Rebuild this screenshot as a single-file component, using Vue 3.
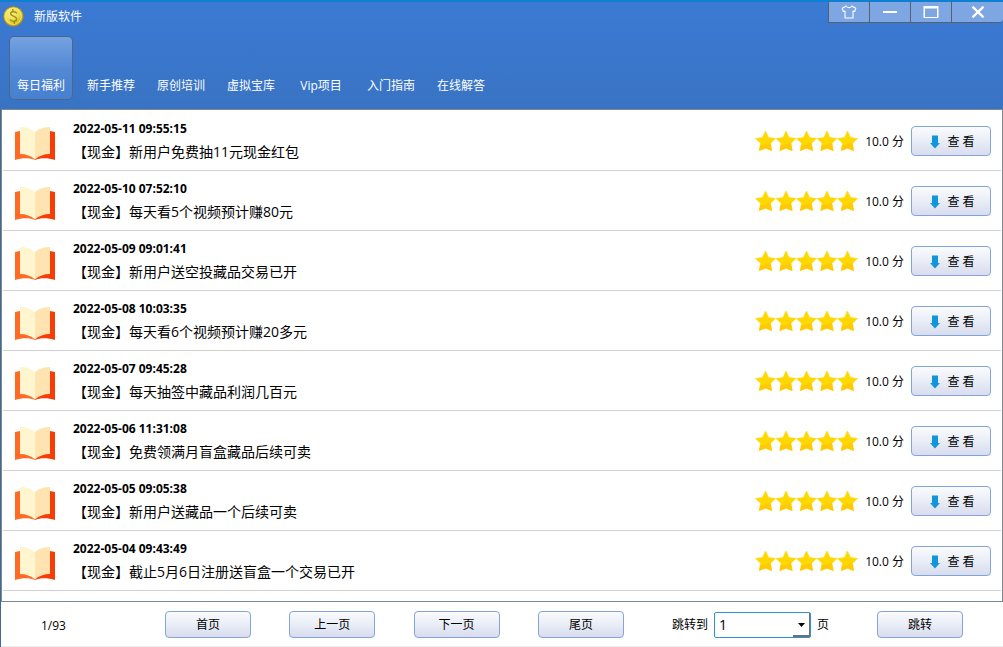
<script setup>
import { ref } from 'vue'

const tabs = ['每日福利', '新手推荐', '原创培训', '虚拟宝库', 'Vip项目', '入门指南', '在线解答']
const active = ref(0)
const page = ref(1)

const items = [
  { time: '2022-05-11 09:55:15', title: '【现金】新用户免费抽11元现金红包' },
  { time: '2022-05-10 07:52:10', title: '【现金】每天看5个视频预计赚80元' },
  { time: '2022-05-09 09:01:41', title: '【现金】新用户送空投藏品交易已开' },
  { time: '2022-05-08 10:03:35', title: '【现金】每天看6个视频预计赚20多元' },
  { time: '2022-05-07 09:45:28', title: '【现金】每天抽签中藏品利润几百元' },
  { time: '2022-05-06 11:31:08', title: '【现金】免费领满月盲盒藏品后续可卖' },
  { time: '2022-05-05 09:05:38', title: '【现金】新用户送藏品一个后续可卖' },
  { time: '2022-05-04 09:43:49', title: '【现金】截止5月6日注册送盲盒一个交易已开' }
]
</script>

<template>
  <div class="window">
    <header class="header">
      <div class="titlebar">
        <svg class="coin" viewBox="0 0 22 22" aria-hidden="true">
          <defs>
            <radialGradient id="coinFill" cx="0.4" cy="0.35" r="0.7">
              <stop offset="0" stop-color="#fbf48a" />
              <stop offset="0.6" stop-color="#e6d63a" />
              <stop offset="1" stop-color="#a98f10" />
            </radialGradient>
          </defs>
          <circle cx="11" cy="11" r="10.3" fill="url(#coinFill)" stroke="#a58a1c" stroke-width="0.8" />
          <circle cx="11" cy="11" r="8.2" fill="none" stroke="#f7ef86" stroke-width="1" />
          <path d="M14 7.2C12.6 5.4 8 5.4 8 8.2C8 11 14.2 10.4 14.2 13.6C14.2 16.6 9.4 16.8 7.8 14.6M10.2 3.8L10.8 6M11.6 15.8L12 18.2" fill="none" stroke="#a38c1a" stroke-width="1.5" stroke-linecap="round" />
        </svg>
        <h1 class="name">新版软件</h1>
        <div class="controls">
          <button class="ctl" type="button" aria-label="换肤">
            <svg width="16" height="14" viewBox="0 0 16 14" fill="none" stroke="#fff" stroke-width="1.1" stroke-linejoin="round">
              <path d="M5.3 1L1.2 3.2L2.2 6.4L4 6V13H12V6L13.8 6.4L14.8 3.2L10.7 1C10.2 3.2 5.8 3.2 5.3 1Z" />
            </svg>
          </button>
          <button class="ctl" type="button" aria-label="最小化">
            <svg width="14" height="14" viewBox="0 0 14 14"><path d="M0 6H14V8H0Z" fill="#fff" /></svg>
          </button>
          <button class="ctl" type="button" aria-label="最大化">
            <svg width="16" height="12" viewBox="0 0 16 12"><path fill-rule="evenodd" d="M0.5 0H15.5V12H0.5ZM2 2.5V11H14V2.5Z" fill="#fff" /></svg>
          </button>
          <button class="ctl close" type="button" aria-label="关闭">
            <svg width="14" height="12" viewBox="0 0 14 12"><path d="M1.5 0.7L12.5 11.3M12.5 0.7L1.5 11.3" stroke="#fff" stroke-width="2.4" /></svg>
          </button>
        </div>
      </div>
      <nav class="tabs">
        <button
          v-for="(tab, i) in tabs"
          :key="tab"
          type="button"
          class="tab"
          :class="{ active: i === active }"
          @click="active = i"
        >{{ tab }}</button>
      </nav>
    </header>

    <main class="body">
      <ul class="list">
        <li v-for="item in items" :key="item.time" class="row">
          <svg class="book" viewBox="0 0 42 36" aria-hidden="true">
            <path d="M1 6L6 5L21 10V34C16 31.5 8 31.5 1 34Z" fill="#ff6a25" />
            <path d="M41 6L36 5L21 10V34C26 31.5 34 31.5 41 34Z" fill="#f83c05" />
            <path d="M6 1Q15 1 21 6V33.5Q15 28 6 28Z" fill="#fff5cf" />
            <path d="M36 1Q27 1 21 6V33.5Q27 28 36 28Z" fill="#ffe4b1" />
          </svg>
          <div class="text">
            <time class="time">{{ item.time }}</time>
            <p class="title">{{ item.title }}</p>
          </div>
          <svg class="stars" viewBox="0 0 103 22" role="img" aria-label="五星">
            <g v-for="n in 5" :key="n" :transform="`translate(${(n - 1) * 20.5} 0)`">
              <path d="M10.5 1L13.5 7.6L20.5 8.5L15.4 13.3L16.8 20.7L10.5 18.2L4.2 20.7L5.6 13.3L0.5 8.5L7.5 7.6Z" fill="#ffd800" stroke="#ffd800" stroke-width="0.6" stroke-linejoin="round" />
              <path d="M18 10.9L15.4 13.3L16.8 20.7L10.5 18.2L4.2 20.7L5.2 15.3Q13 15 18 10.9Z" fill="#ffc808" />
            </g>
          </svg>
          <span class="score">10.0 分</span>
          <button class="btn view" type="button">
            <svg width="10" height="14" viewBox="0 0 10 14" aria-hidden="true">
              <path d="M2 0.5H8V8H10L5 13.5L0 8H2Z" fill="#1296db" />
            </svg>
            <span>查 看</span>
          </button>
        </li>
      </ul>
    </main>

    <footer class="footer">
      <span class="count">1/93</span>
      <div class="pager">
        <button class="btn" type="button">首页</button>
        <button class="btn" type="button">上一页</button>
        <button class="btn" type="button">下一页</button>
        <button class="btn" type="button">尾页</button>
      </div>
      <div class="jump">
        <label for="page">跳转到</label>
        <span class="combo">
          <select id="page" v-model="page">
            <option v-for="n in 93" :key="n" :value="n">{{ n }}</option>
          </select>
          <svg class="caret" width="7" height="4" viewBox="0 0 7 4" aria-hidden="true"><path d="M0 0H7L3.5 4Z" fill="#000" /></svg>
        </span>
        <span>页</span>
      </div>
      <button class="btn go" type="button">跳转</button>
    </footer>
  </div>
</template>

<style>
body {
  background: #fff;
}
</style>

<style scoped>
.window,
.window * {
  box-sizing: border-box;
}
.window {
  display: flex;
  flex-direction: column;
  min-height: 100vh;
  border-left: 1px solid #3c6a9c;
  font-family: "Open Sans", "Noto Sans CJK SC", sans-serif;
  font-size: 12px;
  line-height: 18px;
  color: #000;
}
button {
  margin: 0;
  padding: 0;
  font: inherit;
  color: inherit;
}
.header {
  margin-left: -1px;
  padding-bottom: 9px;
  border-top: 2px solid #0f7fd0;
  background: linear-gradient(#3b7ad4, #3973c3);
  color: #fff;
}
.titlebar {
  display: flex;
  align-items: flex-start;
  padding-left: 3px;
}
.coin {
  width: 21px;
  height: 21px;
  margin-top: 4px;
}
.name {
  flex: 1;
  margin: 6px 0 0 10px;
  font-size: 12px;
  font-weight: 400;
}
.controls {
  display: flex;
  height: 21px;
  border: solid #54626f;
  border-width: 0 0 1px 1px;
  border-bottom-right-radius: 4px;
  overflow: hidden;
}
.ctl {
  display: flex;
  align-items: center;
  justify-content: center;
  width: 41px;
  border: 0;
  border-right: 1px solid #54626f;
  background: #7da6e2;
}
.ctl.close {
  width: 51px;
  border-right: 0;
}
.tabs {
  display: flex;
  gap: 6px;
  padding: 9px 9px 0;
}
.tab {
  display: flex;
  align-items: flex-end;
  justify-content: center;
  width: 64px;
  height: 64px;
  padding-bottom: 4px;
  border: 1px solid transparent;
  border-radius: 5px;
  background: none;
}
.tab.active {
  border-color: #4d668c;
  background: linear-gradient(#76a2e0, #5389d4 50%, #4680cf);
}
.body {
  flex: 1;
  border: 1px solid #828790;
  border-bottom-color: #7b8792;
}
.list {
  margin: 0;
  padding: 1px 1px 0;
  list-style: none;
}
.row {
  display: flex;
  align-items: center;
  height: 60px;
  padding: 0 10px 0 11px;
  border-bottom: 1px solid #d3d3d3;
}
.book {
  width: 42px;
  height: 36px;
  margin-top: 6px;
}
.text {
  flex: 1;
  margin: 2px 0 0 17px;
}
.time {
  display: block;
  font-weight: 700;
  line-height: 20px;
}
.title {
  margin: 0;
  font-size: 14px;
  line-height: 26px;
}
.stars {
  width: 103px;
  height: 22px;
}
.score {
  margin: 2px 7px 0 7px;
}
.btn {
  height: 27px;
  padding-top: 1px;
  border: 1px solid #83a6d8;
  border-radius: 4px;
  background: linear-gradient(#fafbfd, #e9edf6 50%, #d8dcee);
}
.view {
  display: flex;
  align-items: center;
  justify-content: center;
  gap: 7px;
  width: 80px;
  height: 30px;
  padding: 2px 0 0 3px;
}
.footer {
  display: flex;
  align-items: center;
  height: 45px;
  padding: 1px 40px 0 40px;
  border-bottom: 1px solid #ececec;
}
.count {
  width: 124px;
  padding-top: 2px;
}
.pager {
  display: flex;
  flex: 1;
  justify-content: space-between;
}
.pager .btn,
.go {
  width: 86px;
}
.jump {
  display: flex;
  align-items: center;
  gap: 6px;
  margin: 0 48px;
}
.combo {
  position: relative;
}
.combo select {
  display: block;
  width: 97px;
  height: 26px;
  padding: 0 4px;
  appearance: none;
  border: 1px solid #2f92d6;
  border-radius: 2px;
  background: #fff;
  font: inherit;
  font-size: 14px;
  color: #000;
}
.combo::after {
  content: "";
  position: absolute;
  top: 1px;
  right: 1px;
  bottom: 1px;
  width: 16px;
  border: solid #707070;
  border-width: 0 1px 2px 0;
  pointer-events: none;
}
.caret {
  position: absolute;
  top: 11px;
  right: 6px;
  pointer-events: none;
}
</style>
